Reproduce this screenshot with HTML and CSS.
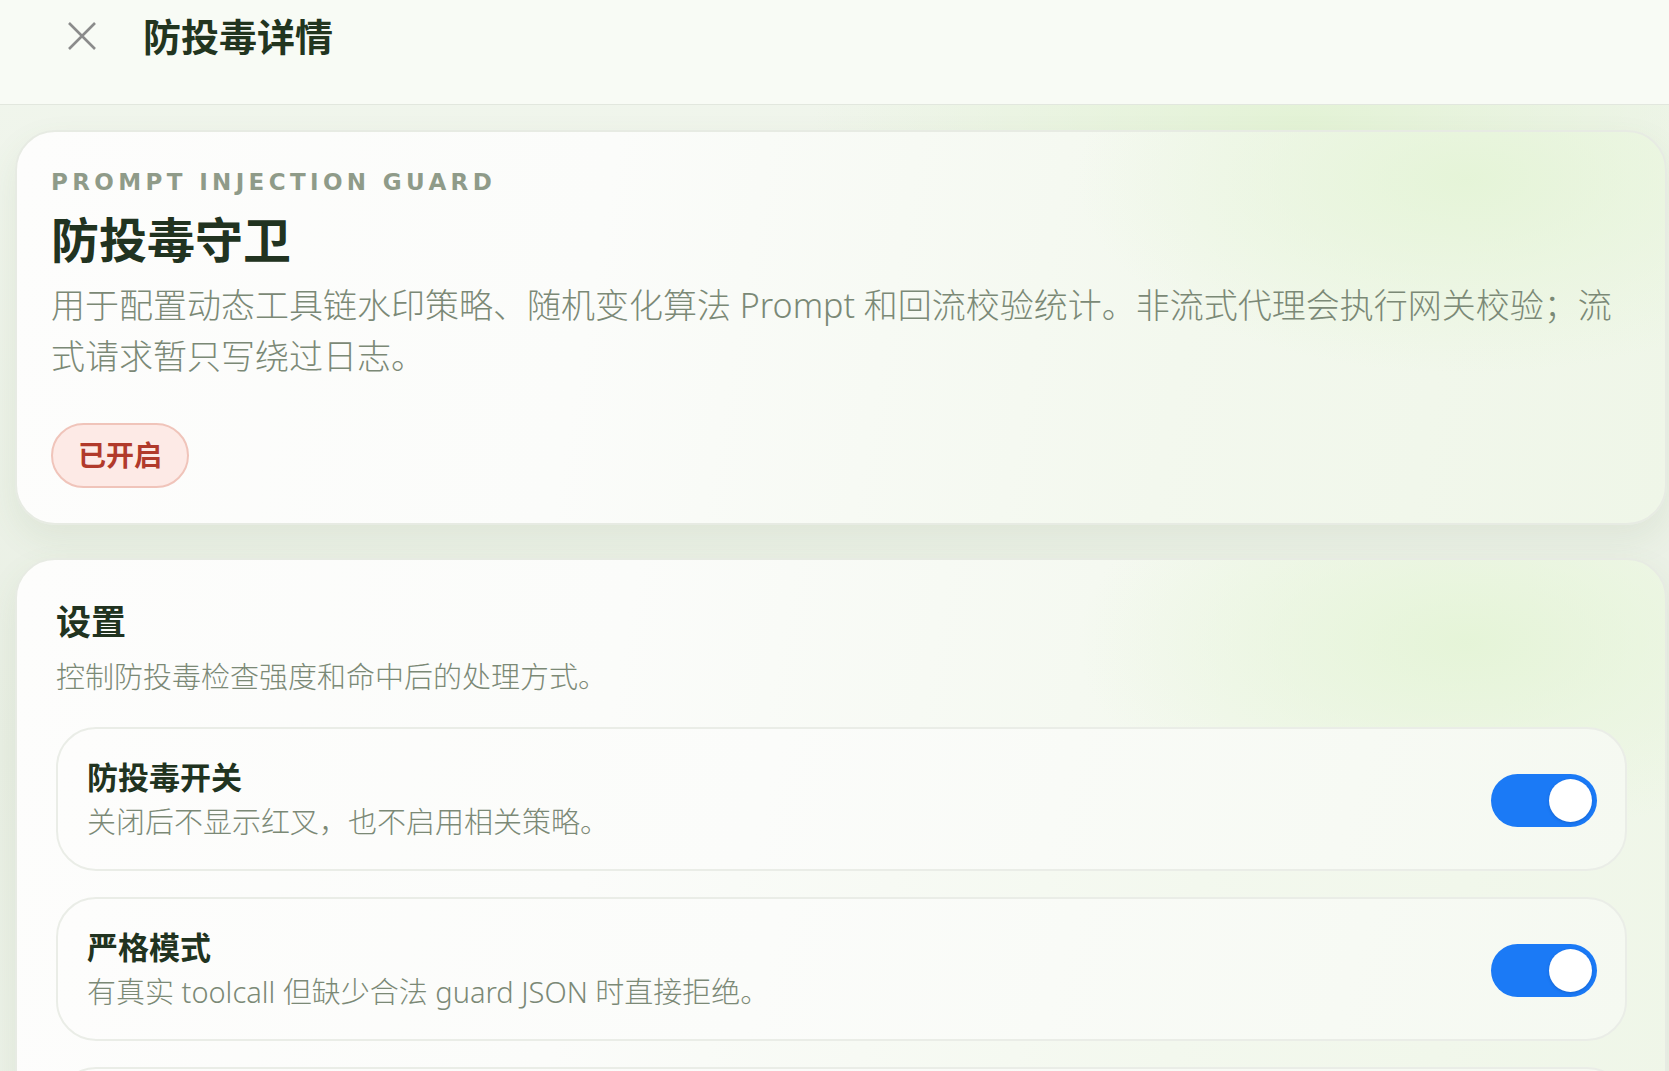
FILE: index.html
```html
<!DOCTYPE html>
<html lang="zh-CN">
<head>
  <meta charset="utf-8">
  <meta name="viewport" content="width=device-width, initial-scale=1">
  <title>防投毒详情</title>
  <link rel="stylesheet" href="styles.css">
</head>
<body>
  <header class="topbar">
    <button class="close-btn" aria-label="关闭">
      <svg width="30" height="30" viewBox="0 0 30 30">
        <path d="M2 2 L28 28 M28 2 L2 28" stroke="#8b8b8b" stroke-width="2.6" stroke-linecap="butt" fill="none"/>
      </svg>
    </button>
    <h1 class="topbar-title">防投毒详情</h1>
  </header>

  <main class="page">
    <section class="card hero">
      <div class="eyebrow">PROMPT INJECTION GUARD</div>
      <h2 class="hero-title">防投毒守卫</h2>
      <p class="hero-desc">用于配置动态工具链水印策略、随机变化算法 Prompt 和回流校验统计。非流式代理会执行网关校验；流式请求暂只写绕过日志。</p>
      <span class="badge">已开启</span>
    </section>

    <section class="card settings">
      <h3 class="section-title">设置</h3>
      <p class="section-desc">控制防投毒检查强度和命中后的处理方式。</p>

      <div class="rows">
        <div class="row">
          <div class="row-text">
            <div class="row-title">防投毒开关</div>
            <div class="row-desc">关闭后不显示红叉，也不启用相关策略。</div>
          </div>
          <label class="switch">
            <input type="checkbox" checked>
            <span class="slider"></span>
          </label>
        </div>
        <div class="row">
          <div class="row-text">
            <div class="row-title">严格模式</div>
            <div class="row-desc">有真实 toolcall 但缺少合法 guard JSON 时直接拒绝。</div>
          </div>
          <label class="switch">
            <input type="checkbox" checked>
            <span class="slider"></span>
          </label>
        </div>
        <div class="row"></div>
      </div>
    </section>
  </main>
</body>
</html>
```

FILE: styles.css
```css
* {
  box-sizing: border-box;
}
html, body {
  margin: 0;
  padding: 0;
}
body {
  font-family: "Noto Sans", "Noto Sans CJK SC", sans-serif;
  color: #22351f;
  background:
    radial-gradient(ellipse 700px 260px at 78% 120px, rgba(225, 242, 210, 0.85), rgba(225, 242, 210, 0) 70%),
    linear-gradient(180deg, #f1f6ed 0%, #e9efe4 60%, #eef3ea 100%);
  min-height: 100vh;
}

/* top bar */
.topbar {
  display: flex;
  align-items: center;
  padding: 12px 0 43px 67px;
  background: #f8fbf5;
  border-bottom: 1px solid #e2e7de;
}
.close-btn {
  width: 30px;
  height: 30px;
  padding: 0;
  margin: -1px 0 0 0;
  border: 0;
  background: none;
  cursor: pointer;
  display: flex;
}
.topbar-title {
  margin: 0 0 0 46px;
  font-size: 38px;
  line-height: 49px;
  font-weight: 700;
  color: #22351f;
}

/* page */
.page {
  padding: 25px 2px 0 15px;
}
.card {
  border: 2px solid #e7ebe3;
  border-radius: 40px;
  background:
    radial-gradient(ellipse 520px 260px at 88% 12%, rgba(228, 244, 214, 0.9), rgba(228, 244, 214, 0) 75%),
    linear-gradient(100deg, #fdfdfc 0%, #fbfcfa 35%, #f3f8ee 70%, #eff6e8 100%);
  box-shadow: 0 14px 34px rgba(90, 120, 70, 0.09);
}

/* hero */
.hero {
  padding: 34px 34px 35px 34px;
}
.eyebrow {
  font-family: "DejaVu Sans", sans-serif;
  font-weight: 700;
  font-size: 23px;
  line-height: 32px;
  letter-spacing: 0.19em;
  color: #8f9b89;
}
.hero-title {
  margin: 12px 0 0 0;
  font-size: 48px;
  line-height: 60px;
  font-weight: 700;
  color: #213320;
}
.hero-desc {
  margin: 10px 0 0 0;
  font-size: 34px;
  line-height: 51px;
  font-weight: 300;
  color: #7b8976;
}
.badge {
  display: inline-block;
  margin-top: 41px;
  height: 65px;
  padding: 0 25px;
  border: 2px solid #f0c4ba;
  border-radius: 33px;
  background: #fdeae6;
  color: #b13a2b;
  font-size: 28px;
  font-weight: 700;
  line-height: 61px;
}

/* settings */
.settings {
  margin-top: 33px;
  padding: 39px 38px 39px 39px;
}
.section-title {
  margin: 0;
  font-size: 35px;
  line-height: 45px;
  font-weight: 700;
  color: #213320;
}
.section-desc {
  margin: 11px 0 0 0;
  font-size: 29px;
  line-height: 43px;
  font-weight: 300;
  color: #7b8976;
}
.rows {
  margin-top: 29px;
  display: flex;
  flex-direction: column;
  gap: 26px;
}
.row {
  display: flex;
  align-items: center;
  justify-content: space-between;
  min-height: 144px;
  padding: 29px 28px 26px 29px;
  border: 2px solid #eaede7;
  border-radius: 40px;
  background: linear-gradient(105deg, #fdfdfc 0%, #fbfcfa 45%, #f5f9f1 100%);
}
.row-title {
  font-size: 31px;
  line-height: 39px;
  font-weight: 700;
  color: #213320;
}
.row-desc {
  margin-top: 4px;
  font-size: 29px;
  line-height: 42px;
  font-weight: 300;
  color: #7b8976;
}

/* switch */
.switch {
  position: relative;
  display: block;
  width: 106px;
  height: 53px;
  flex: none;
  cursor: pointer;
}
.switch input {
  position: absolute;
  opacity: 0;
  width: 0;
  height: 0;
}
.slider {
  position: absolute;
  inset: 0;
  border-radius: 27px;
  background: #c9cfc5;
  transition: background 0.2s;
}
.slider:before {
  content: "";
  position: absolute;
  top: 5px;
  left: 5px;
  width: 43px;
  height: 43px;
  border-radius: 50%;
  background: #fff;
  box-shadow: 0 1px 3px rgba(10, 60, 140, 0.35);
  transition: transform 0.2s;
}
.switch input:checked + .slider {
  background: #1b7af6;
}
.switch input:checked + .slider:before {
  transform: translateX(53px);
}
```
